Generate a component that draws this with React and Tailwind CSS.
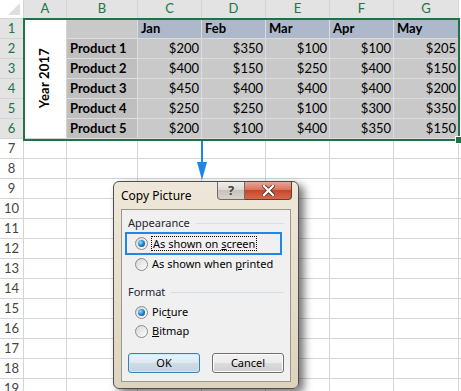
import React from 'react';

const products = [
    ['Product 1', [200, 350, 100, 100, 205]],
    ['Product 2', [400, 150, 250, 400, 150]],
    ['Product 3', [450, 400, 400, 400, 200]],
    ['Product 4', [250, 250, 100, 300, 350]],
    ['Product 5', [200, 100, 400, 350, 150]],
];
const months = ['Jan', 'Feb', 'Mar', 'Apr', 'May'];
const letters = ['A', 'B', 'C', 'D', 'E', 'F', 'G'];

const grid = 'border-r border-b border-[#d4d4d4]';
const filled = 'border-r border-b border-[#dcdcdc]';

const Sheet = () => {
    const rows = [];
    for (let r = 7; r <= 19; r++) {
        rows.push(
            <div key={'h' + r} className={`${grid} bg-white text-[#444] flex items-center justify-center`}>
                {r}
            </div>
        );
        for (let c = 0; c < 8; c++) rows.push(<div key={r + '-' + c} className={grid} />);
    }

    return (
        <div className="grid grid-cols-[24px_43px_71px_64px_64px_64px_64px_65px_40px] grid-rows-[19px_repeat(19,20px)] text-[13px] text-black">
            {/* column headers */}
            <div className={`${grid} bg-white relative`}>
                <svg className="absolute right-[3px] bottom-[3px]" width="12" height="12" viewBox="0 0 12 12">
                    <polygon points="12,0 12,12 0,12" fill="#dedede" />
                </svg>
            </div>
            {letters.map((l) => (
                <div key={l} className={`${grid} border-[#c8c8c8] bg-[#e3e3e3] text-[#217346] flex items-center justify-center`}>
                    {l}
                </div>
            ))}
            <div className={`${grid} bg-white`} />

            {/* row 1 */}
            <div className={`${grid} bg-[#e3e3e3] text-[#217346] flex items-center justify-center`}>1</div>
            <div className={`${grid} row-span-6 bg-white flex items-center justify-center`}>
                <span className="[writing-mode:vertical-rl] rotate-180 font-bold text-[13px] tracking-[0.2px]">Year 2017</span>
            </div>
            <div className={`${filled} bg-[#c9c9c9]`} />
            {months.map((m) => (
                <div key={m} className={`${filled} bg-[#adb9ca] font-bold flex items-center pl-[3px]`}>
                    {m}
                </div>
            ))}
            <div className={grid} />

            {/* rows 2-6 */}
            {products.map(([name, vals], i) => (
                <React.Fragment key={name}>
                    <div className={`${grid} bg-[#e3e3e3] text-[#217346] flex items-center justify-center`}>{i + 2}</div>
                    <div className={`${filled} bg-[#bfbfbf] font-bold flex items-center pl-[3px]`}>{name}</div>
                    {vals.map((v, j) => (
                        <div key={j} className={`${filled} bg-[#c9c9c9] flex items-center justify-end pr-[2px]`}>
                            ${v}
                        </div>
                    ))}
                    <div className={grid} />
                </React.Fragment>
            ))}

            {rows}
        </div>
    );
};

const Radio = ({ checked }) => (
    <span className="w-[13px] h-[13px] shrink-0 rounded-full border border-[#8a8a8a] bg-[linear-gradient(135deg,#d6d6d6,#ffffff)] flex items-center justify-center">
        {checked && (
            <span className="w-[7px] h-[7px] rounded-full bg-[radial-gradient(circle_at_35%_35%,#8fdcff,#1a7ac0_55%,#0b3f6e)]" />
        )}
    </span>
);

const Group = ({ label }) => (
    <div className="flex items-center h-[16px] pl-[6px] pr-[6px]">
        <span className="text-[#1c2533]">{label}</span>
        <span className="ml-[6px] flex-1 h-px bg-[#d5dfe5]" />
    </div>
);

const Button = ({ children, primary }) => (
    <div
        className={`h-[20px] w-[72px] rounded-[3px] border flex items-center justify-center text-black ${
            primary
                ? 'border-[#3c7fb1] bg-[linear-gradient(#eaf3f9_0%,#dde9f1_50%,#cedce6_50%,#c3d3de_100%)] shadow-[inset_0_0_0_1px_#c5eaf9]'
                : 'border-[#707070] bg-[linear-gradient(#f2f2f2_0%,#ebebeb_50%,#dddddd_50%,#cfcfcf_100%)] shadow-[inset_0_0_0_1px_#fcfcfc]'
        }`}
    >
        {children}
    </div>
);

const CopyPictureDialog = () => (
    <div className="absolute left-[113px] top-[181px] w-[186px] h-[208px] rounded-[6px] border border-[#4f4f4f] bg-[linear-gradient(#efe8da,#ddd3bd)] shadow-[5px_4px_8px_rgba(0,0,0,0.55)] flex flex-col font-['Noto_Sans',sans-serif] text-[11px]">
        <div className="relative h-[27px] pl-[7px] flex items-center text-[12px] text-black pt-[1px]">
            Copy Picture
            <div className="absolute left-[103px] top-0 flex">
                <div className="w-[28px] h-[18px] rounded-bl-[4px] border border-t-0 border-[#6c6c6c] bg-[linear-gradient(#f0eeea_0%,#dcd9d2_50%,#c7c3ba_50%,#d7d4cc_100%)] flex items-center justify-center text-[#434343] font-bold text-[13px] leading-none">
                    ?
                </div>
                <div className="w-[47px] h-[18px] rounded-br-[4px] border border-l-0 border-t-0 border-[#6c3a2e] bg-[linear-gradient(#e9a592_0%,#d7705b_50%,#c7462c_50%,#d66a4e_100%)] flex items-center justify-center">
                    <svg width="13" height="11" viewBox="0 0 13 11">
                        <path d="M2 1 L11 10 M11 1 L2 10" stroke="#4a2a22" strokeWidth="4" strokeLinecap="square" />
                        <path d="M2 1 L11 10 M11 1 L2 10" stroke="#ffffff" strokeWidth="2.4" strokeLinecap="square" />
                    </svg>
                </div>
            </div>
        </div>
        <div className="mx-[7px] mb-[6px] flex-1 border border-[#9c9789] bg-[#f0f0f0] pt-[5px] text-black flex flex-col">
            <Group label="Appearance" />
            <div className="mt-[1px] ml-[3px] mr-[8px] h-[23px] border-2 border-[#1e88e8] pl-[8px] flex items-center">
                <Radio checked />
                <span className="ml-[3px] px-[1px] border border-dotted border-black leading-[13px]">
                    As shown on <u>s</u>creen
                </span>
            </div>
            <div className="h-[19px] pl-[13px] flex items-center">
                <Radio />
                <span className="ml-[4px]">
                    As shown when <u>p</u>rinted
                </span>
            </div>
            <div className="mt-[10px]">
                <Group label="Format" />
            </div>
            <div className="mt-[3px] h-[19px] pl-[13px] flex items-center">
                <Radio checked />
                <span className="ml-[4px]">
                    Pic<u>t</u>ure
                </span>
            </div>
            <div className="h-[19px] pl-[13px] flex items-center">
                <Radio />
                <span className="ml-[4px]">
                    <u>B</u>itmap
                </span>
            </div>
            <div className="mt-[12px] pl-[6px] flex gap-[12px]">
                <Button primary>OK</Button>
                <Button>Cancel</Button>
            </div>
        </div>
    </div>
);

export default function App() {
    return (
        <div className="relative w-[461px] h-[391px] overflow-hidden bg-white font-['Lato',sans-serif]">
            <Sheet />

            {/* selection outline */}
            <div className="absolute left-[23px] top-[18px] w-[437px] h-[123px] border-2 border-[#217346]">
                <div className="absolute -right-[4px] -bottom-[4px] w-[6px] h-[6px] bg-[#217346] outline outline-1 outline-white" />
            </div>

            {/* arrow */}
            <svg className="absolute left-[196px] top-[141px]" width="12" height="40" viewBox="0 0 12 40">
                <rect x="5" y="0" width="2" height="26" fill="#1a86e8" />
                <polygon points="1,21 11,21 6,39" fill="#1a86e8" />
            </svg>

            <CopyPictureDialog />
        </div>
    );
}
